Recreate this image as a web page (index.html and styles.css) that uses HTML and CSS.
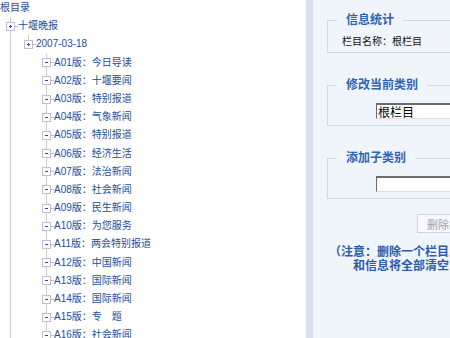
FILE: index.html
```html
<!DOCTYPE html>
<html lang="zh-CN">
<head>
    <meta charset="UTF-8">
    <title>栏目管理</title>
    <link rel="stylesheet" href="styles.css">
</head>
<body>
    <div class="page">
        <div class="tree">
            <div class="node"><span class="label">根目录</span></div>
            <div class="node">
                <span class="cell join"><i class="box plus"></i></span>
                <span class="label">十堰晚报</span>
            </div>
            <div class="node">
                <span class="cell line"></span>
                <span class="cell joinbottom"><i class="box plus"></i></span>
                <span class="label">2007-03-18</span>
            </div>
            <div class="node"><span class="cell line"></span><span class="cell"></span><span class="cell join"><i class="box minus"></i></span><span class="label">A01版：今日导读</span></div>
            <div class="node"><span class="cell line"></span><span class="cell"></span><span class="cell join"><i class="box minus"></i></span><span class="label">A02版：十堰要闻</span></div>
            <div class="node"><span class="cell line"></span><span class="cell"></span><span class="cell join"><i class="box minus"></i></span><span class="label">A03版：特别报道</span></div>
            <div class="node"><span class="cell line"></span><span class="cell"></span><span class="cell join"><i class="box minus"></i></span><span class="label">A04版：气象新闻</span></div>
            <div class="node"><span class="cell line"></span><span class="cell"></span><span class="cell join"><i class="box minus"></i></span><span class="label">A05版：特别报道</span></div>
            <div class="node"><span class="cell line"></span><span class="cell"></span><span class="cell join"><i class="box minus"></i></span><span class="label">A06版：经济生活</span></div>
            <div class="node"><span class="cell line"></span><span class="cell"></span><span class="cell join"><i class="box minus"></i></span><span class="label">A07版：法治新闻</span></div>
            <div class="node"><span class="cell line"></span><span class="cell"></span><span class="cell join"><i class="box minus"></i></span><span class="label">A08版：社会新闻</span></div>
            <div class="node"><span class="cell line"></span><span class="cell"></span><span class="cell join"><i class="box minus"></i></span><span class="label">A09版：民生新闻</span></div>
            <div class="node"><span class="cell line"></span><span class="cell"></span><span class="cell join"><i class="box minus"></i></span><span class="label">A10版：为您服务</span></div>
            <div class="node"><span class="cell line"></span><span class="cell"></span><span class="cell join"><i class="box minus"></i></span><span class="label">A11版：两会特别报道</span></div>
            <div class="node"><span class="cell line"></span><span class="cell"></span><span class="cell join"><i class="box minus"></i></span><span class="label">A12版：中国新闻</span></div>
            <div class="node"><span class="cell line"></span><span class="cell"></span><span class="cell join"><i class="box minus"></i></span><span class="label">A13版：国际新闻</span></div>
            <div class="node"><span class="cell line"></span><span class="cell"></span><span class="cell join"><i class="box minus"></i></span><span class="label">A14版：国际新闻</span></div>
            <div class="node"><span class="cell line"></span><span class="cell"></span><span class="cell join"><i class="box minus"></i></span><span class="label">A15版：专　题</span></div>
            <div class="node"><span class="cell line"></span><span class="cell"></span><span class="cell join"><i class="box minus"></i></span><span class="label">A16版：社会新闻</span></div>
            <div class="node"><span class="cell line"></span><span class="cell"></span><span class="cell join"><i class="box minus"></i></span><span class="label">A17版：体育新闻</span></div>
        </div>

        <div class="split"></div>

        <div class="main">
            <fieldset class="group">
                <legend>信息统计</legend>
                <p class="stat">栏目名称：根栏目</p>
            </fieldset>
            <fieldset class="group">
                <legend>修改当前类别</legend>
                <input class="field" type="text" value="根栏目">
            </fieldset>
            <fieldset class="group">
                <legend>添加子类别</legend>
                <input class="field" type="text">
            </fieldset>
            <div class="actions">
                <button class="btn" disabled>删除栏目</button>
            </div>
            <p class="note">（注意：删除一个栏目后，其下所有的子栏目<br>和信息将全部清空，请谨慎操作！）</p>
        </div>
    </div>
</body>
</html>
```

FILE: styles.css
```css
html, body {
    height: 100%;
    margin: 0;
    overflow: hidden;
}
body {
    font-family: "Liberation Sans", "Noto Sans CJK SC", sans-serif;
    background: #ffffff;
}
.page {
    display: flex;
    height: 100%;
}

/* tree on the left */
.tree {
    width: 306px;
    flex: none;
    margin-top: -1px;
    font-size: 10px;
    color: #1d4d98;
    background: #ffffff;
}
.node {
    display: flex;
    height: 18.2px;
    line-height: 18.2px;
    white-space: nowrap;
}
.cell {
    width: 18px;
    flex: none;
    display: flex;
    align-items: center;
}
.line {
    background: linear-gradient(#d9c9ba, #d9c9ba) 10px 0 / 1px 100% no-repeat;
}
.join {
    background:
        linear-gradient(#d9c9ba, #d9c9ba) 10px 0 / 1px 100% no-repeat,
        linear-gradient(#c9bbae, #c9bbae) 15px 50% / 3px 1px no-repeat;
}
.joinbottom {
    background:
        linear-gradient(#d9c9ba, #d9c9ba) 10px 0 / 1px 50% no-repeat,
        linear-gradient(#c9bbae, #c9bbae) 15px 50% / 3px 1px no-repeat;
}
.box {
    display: block;
    width: 9px;
    height: 9px;
    margin-left: 6px;
    box-sizing: border-box;
    border: 1px solid #c4bbd8;
    background-color: #ffffff;
}
.minus {
    background-image: linear-gradient(#4a3f9c, #4a3f9c);
    background-position: center;
    background-size: 3px 1px;
    background-repeat: no-repeat;
}
.plus {
    background-image: linear-gradient(#4a3f9c, #4a3f9c), linear-gradient(#4a3f9c, #4a3f9c);
    background-position: center, center;
    background-size: 3px 1px, 1px 3px;
    background-repeat: no-repeat;
}

/* frame divider */
.split {
    width: 7px;
    flex: none;
    background: #d7e1f2;
}

/* right panel */
.main {
    width: 272px;
    flex: none;
    padding-top: 13px;
    background: #f0f5fc;
}
.group {
    margin: 25px 14px 0;
    padding: 0 9px 0;
    border: 1px solid #cbd9ef;
    min-width: 0;
}
.group:first-child {
    margin-top: 0;
}
.group legend {
    padding: 0 9px;
    font-size: 12px;
    line-height: 14px;
    font-weight: bold;
    color: #2d62b5;
}
.stat {
    margin: 8px 0 3px 5px;
    font-size: 10px;
    line-height: 14px;
    color: #111111;
}
.field {
    display: block;
    box-sizing: border-box;
    width: 170px;
    height: 16px;
    margin: 11px 0 6px 39px;
    padding: 0 1px;
    font-family: "Liberation Sans", "Noto Sans CJK SC", sans-serif;
    font-size: 12px;
    line-height: 14px;
    color: #000000;
    background: #ffffff;
    border: 1px solid;
    border-color: #6a6a6a #e6dada #eadcdc #6a6a6a;
    border-top-width: 2px;
    outline: none;
}
.actions {
    margin-top: 15px;
    text-align: center;
}
.btn {
    width: 64px;
    height: 19px;
    padding: 0;
    font-family: "Liberation Sans", "Noto Sans CJK SC", sans-serif;
    font-size: 11px;
    color: #a3a3a3;
    background: #f7f9fd;
    border: 1px solid #c9d5e6;
}
.note {
    margin: 12px 0 0;
    font-size: 12px;
    line-height: 14px;
    font-weight: bold;
    text-align: center;
    color: #2a5cab;
    white-space: nowrap;
}
```
